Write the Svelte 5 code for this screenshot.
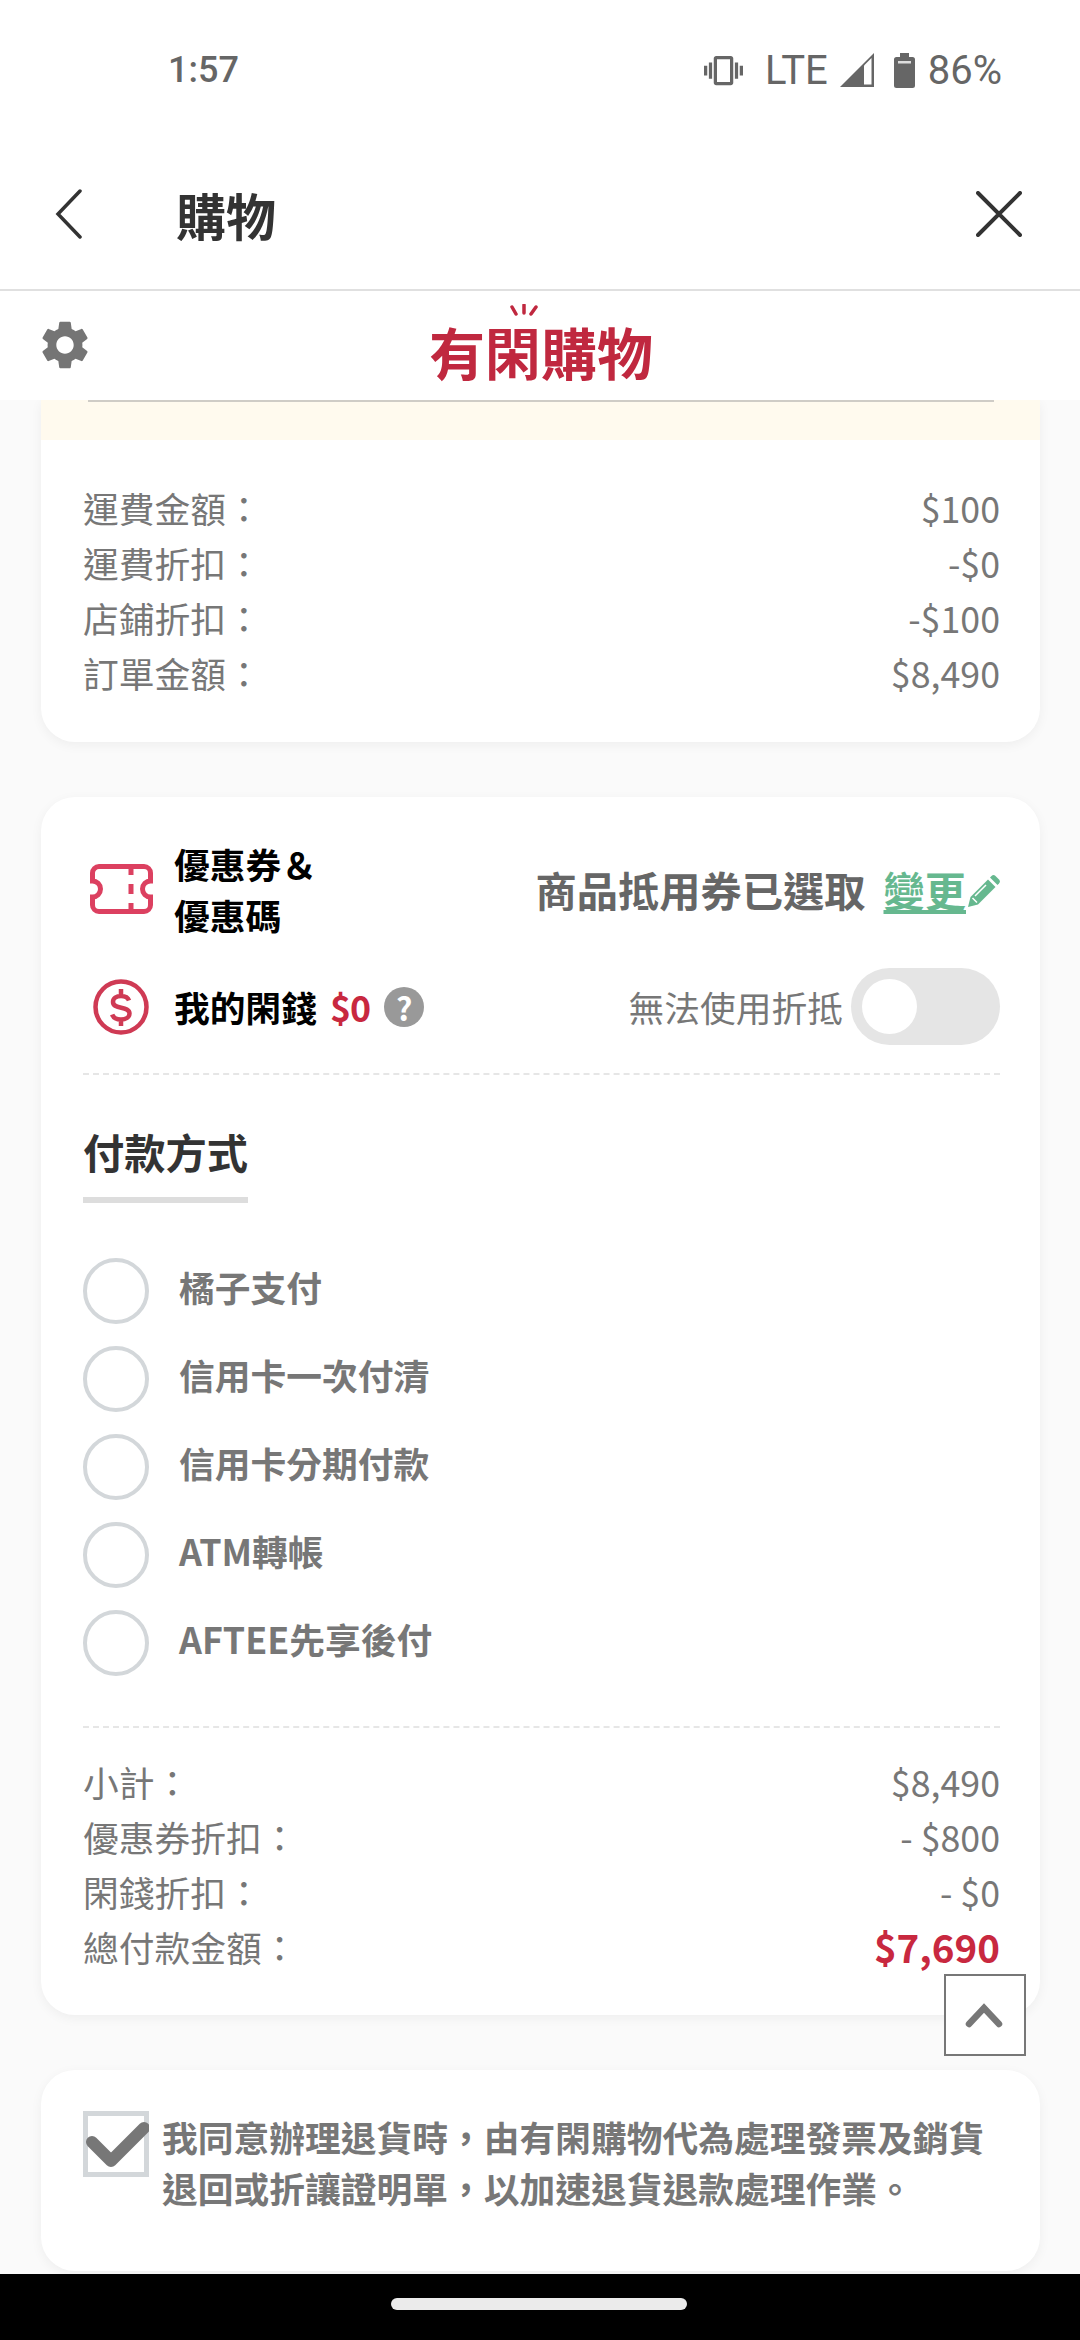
<script>
	const shipping = [
		['運費金額：', '$100'],
		['運費折扣：', '-$0'],
		['店鋪折扣：', '-$100'],
		['訂單金額：', '$8,490']
	];
	const methods = ['橘子支付', '信用卡一次付清', '信用卡分期付款', 'ATM轉帳', 'AFTEE先享後付'];
	const totals = [
		['小計：', '$8,490'],
		['優惠券折扣：', '- $800'],
		['閑錢折扣：', '- $0']
	];
</script>

<div class="screen">
	<div class="status">
		<span class="time">1:57</span>
		<div class="status-right">
			<svg class="vibrate" viewBox="0 0 24 24"><path d="M0 15h2V9H0v6zm3 2h2V7H3v10zm19-8v6h2V9h-2zm-3 8h2V7h-2v10zM16.5 3h-9C6.67 3 6 3.67 6 4.5v15c0 .83.67 1.5 1.5 1.5h9c.83 0 1.5-.67 1.5-1.5v-15c0-.83-.67-1.5-1.5-1.5zM16 19H8V5h8v14z" /></svg>
			<span class="lte">LTE</span>
			<svg class="signal" viewBox="0 0 34 34">
				<path d="M0 34 34 0v34z" fill="#666" />
				<path d="M24 12.5 31.5 5v26.500H24z" fill="#fff" />
			</svg>
			<svg class="battery" viewBox="0 0 21 35">
				<path d="M6 0h9v4h3.500A2.500 2.500 0 0 1 21 6.500V32.500A2.500 2.500 0 0 1 18.500 35H2.500A2.500 2.500 0 0 1 0 32.500V6.500A2.500 2.500 0 0 1 2.500 4H6z" fill="#666" />
				<rect x="4" y="8" width="13" height="2.500" fill="#ddd" />
			</svg>
			<span class="pct">86%</span>
		</div>
	</div>

	<header class="topbar">
		<svg class="back" viewBox="0 0 27 50"><path d="M25 2 3 25l22 23" /></svg>
		<h1>購物</h1>
		<svg class="close" viewBox="0 0 46 46"><path d="M2 2l42 42M44 2 2 44" /></svg>
	</header>

	<div class="brand">
		<svg class="gear" viewBox="0 0 24 24"><path d="M19.14,12.94c0.04-0.3,0.06-0.61,0.06-0.94c0-0.32-0.02-0.64-0.07-0.94l2.03-1.58c0.18-0.14,0.23-0.41,0.12-0.61 l-1.92-3.32c-0.12-0.22-0.37-0.29-0.59-0.22l-2.39,0.96c-0.5-0.38-1.03-0.7-1.62-0.94L14.4,2.81c-0.04-0.24-0.24-0.41-0.48-0.41 h-3.84c-0.24,0-0.43,0.17-0.47,0.41L9.25,5.35C8.66,5.59,8.12,5.92,7.63,6.29L5.24,5.33c-0.22-0.08-0.47,0-0.59,0.22L2.74,8.87 C2.62,9.08,2.66,9.34,2.86,9.48l2.03,1.58C4.84,11.36,4.8,11.69,4.8,12s0.02,0.64,0.07,0.94l-2.03,1.58 c-0.18,0.14-0.23,0.41-0.12,0.61l1.92,3.32c0.12,0.22,0.37,0.29,0.59,0.22l2.39-0.96c0.5,0.38,1.03,0.7,1.62,0.94l0.36,2.54 c0.05,0.24,0.24,0.41,0.48,0.41h3.84c0.24,0,0.44-0.17,0.47-0.41l0.36-2.54c0.59-0.24,1.13-0.56,1.62-0.94l2.39,0.96 c0.22,0.08,0.47,0,0.59-0.22l1.92-3.32c0.12-0.22,0.07-0.47-0.12-0.61L19.14,12.94z M12,15.6c-1.98,0-3.6-1.62-3.6-3.6 s1.62-3.6,3.6-3.6s3.6,1.62,3.6,3.6S13.98,15.6,12,15.6z" /></svg>
		<div class="logo">
			<svg class="sparks" viewBox="0 0 28 14"><path d="M2 3l4 7M14 1v8M26 3l-5 7" /></svg>
			<span>有閑購物</span>
		</div>
	</div>

	<main class="content">
		<section class="card first">
			<div class="cream"><div class="cream-line"></div></div>
			<div class="rows">
				{#each shipping as [label, value]}
					<div class="row"><span>{label}</span><span>{value}</span></div>
				{/each}
			</div>
		</section>

		<section class="card second">
			<div class="coupon">
				<svg class="ticket" viewBox="0 0 63 50">
					<path d="M9 2.500H54a6.500 6.500 0 0 1 6.500 6.500v8a8 8 0 0 0 0 16v8a6.500 6.500 0 0 1-6.500 6.500H9a6.500 6.500 0 0 1-6.500-6.500v-8a8 8 0 0 0 0-16V9A6.500 6.500 0 0 1 9 2.500z" />
					<path d="M41 2v9M41 20v10M41 39v9" />
				</svg>
				<div class="coupon-label">優惠券＆<br />優惠碼</div>
				<div class="coupon-state">
					商品抵用券已選取
					<span class="change">變更</span>
					<svg class="pencil" viewBox="0 0 32 32">
						<path d="M0 32l2.500-10L20 4.500l7.500 7.500L10 29.500z" fill="#66b88f" />
						<path d="M22 2.500 23.500 1a3 3 0 0 1 4 0l3.500 3.500a3 3 0 0 1 0 4L29.500 10z" fill="#66b88f" />
						<path d="M4.500 23l4.500 4.500M7 21 18 10" stroke="#fff" stroke-width="1.500" fill="none" />
					</svg>
				</div>
			</div>

			<div class="coins">
				<svg class="coin" viewBox="0 0 56 56">
					<circle cx="28" cy="28" r="25.500" />
					<path d="M36 21.500c-1-3-4-4.500-8-4.500-4.500 0-8 2.400-8 6 0 8 16.500 3.500 16.500 11.500 0 3.700-3.800 6-8.500 6-4.200 0-7.600-1.600-8.800-5M28 10v7M28 40v7" />
				</svg>
				<span class="coin-label">我的閑錢</span>
				<span class="coin-value">$0</span>
				<span class="help">?</span>
				<span class="disabled-note">無法使用折抵</span>
				<span class="toggle"><span class="knob"></span></span>
			</div>

			<div class="dash dash-a"></div>

			<h2>付款方式</h2>

			<div class="methods">
				{#each methods as method}
					<div class="method"><span class="radio"></span><span class="method-name">{method}</span></div>
				{/each}
			</div>

			<div class="dash dash-b"></div>

			<div class="rows">
				{#each totals as [label, value]}
					<div class="row"><span>{label}</span><span>{value}</span></div>
				{/each}
				<div class="row"><span>總付款金額：</span><span class="grand">$7,690</span></div>
			</div>
		</section>

		<section class="card third">
			<div class="agree">
				<span class="check">
					<svg viewBox="0 0 66 66"><path d="M9 31l19 19 33-33" /></svg>
				</span>
				<p>我同意辦理退貨時，由有閑購物代為處理發票及銷貨退回或折讓證明單，以加速退貨退款處理作業。</p>
			</div>
		</section>

		<button class="to-top" aria-label="top">
			<svg viewBox="0 0 38 26"><path d="M4 22 19 6l15 16" /></svg>
		</button>
	</main>

	<div class="navbar"><span class="pill"></span></div>
</div>

<style>
	:global(body) {
		margin: 0;
		background: #fafafa;
	}

	.screen {
		width: 1080px;
		height: 2340px;
		display: flex;
		flex-direction: column;
		overflow: hidden;
		font-family: 'Noto Sans CJK TC', 'Noto Sans', sans-serif;
		font-size: 35.75px;
		color: #777;
		background: #fafafa;
	}

	/* status bar */
	.status {
		height: 140px;
		flex: none;
		display: flex;
		align-items: center;
		padding: 0 78px 0 168px;
		background: #fff;
		font-family: Roboto, sans-serif;
		font-size: 40px;
		color: #666;
	}
	.time {
		font-size: 36px;
		font-weight: 500;
	}
	.status-right {
		margin-left: auto;
		display: flex;
		align-items: center;
	}
	.vibrate {
		width: 39px;
		height: 39px;
		fill: #666;
	}
	.lte {
		margin-left: 22px;
	}
	.signal {
		width: 34px;
		height: 34px;
		margin-left: 12px;
	}
	.battery {
		width: 21px;
		height: 35px;
		margin-left: 20px;
	}
	.pct {
		margin-left: 13px;
	}

	/* app bar */
	.topbar {
		height: 149px;
		flex: none;
		box-sizing: border-box;
		display: flex;
		align-items: center;
		padding: 0 58px 0 55px;
		background: #fff;
	}
	.topbar h1 {
		margin: -2px 0 0 94px;
		font-size: 50px;
		font-weight: 700;
		color: #333;
	}
	.back {
		width: 27px;
		height: 50px;
		margin-top: -2px;
		fill: none;
		stroke: #333;
		stroke-width: 3.5;
		stroke-linecap: round;
	}
	.close {
		width: 46px;
		height: 46px;
		margin: -2px 0 0 auto;
		fill: none;
		stroke: #333;
		stroke-width: 4;
		stroke-linecap: round;
	}

	.brand {
		height: 109px;
		flex: none;
		display: flex;
		align-items: center;
		justify-content: center;
		position: relative;
		background: #fff;
		border-top: 2px solid #e0e0e0;
		z-index: 1;
	}
	.gear {
		position: absolute;
		left: 36px;
		top: 25px;
		width: 58px;
		height: 58px;
		fill: #757575;
	}
	.logo {
		position: relative;
		font-size: 56px;
		font-weight: 700;
		line-height: 66px;
		color: #c0283f;
		margin: 10px 0 0 2px;
		white-space: nowrap;
	}
	.sparks {
		position: absolute;
		left: 81px;
		top: -14px;
		width: 28px;
		height: 14px;
		fill: none;
		stroke: #c0283f;
		stroke-width: 3.500;
		stroke-linecap: round;
	}

	/* scrolled content */
	.content {
		flex: 1;
		min-height: 0;
		position: relative;
		overflow: hidden;
	}
	.card {
		margin: 0 40px 55px 41px;
		padding: 0 40px 0 42px;
		background: #fff;
		border-radius: 34px;
		box-shadow: 0 3px 12px rgba(0, 0, 0, 0.05);
	}
	.first {
		padding: 0 0 42px;
		border-radius: 0 0 34px 34px;
	}
	.first .rows {
		padding: 40px 40px 0 42px;
	}
	.cream {
		height: 40px;
		background: #fffaee;
	}
	.cream-line {
		height: 2px;
		margin: 0 46px 0 47px;
		background: #cfccc6;
	}
	.row {
		display: flex;
		justify-content: space-between;
		align-items: center;
		height: 55px;
		line-height: 55px;
	}
	.grand {
		font-size: 38.5px;
		font-weight: 700;
		color: #c8283f;
	}

	.second {
		padding-top: 41px;
		padding-bottom: 41px;
	}
	.coupon {
		display: flex;
		align-items: center;
		height: 102px;
		color: #000;
	}
	.ticket {
		width: 63px;
		height: 50px;
		margin-left: 7px;
		fill: none;
		stroke: #dc4060;
		stroke-width: 5;
	}
	.coupon-label {
		margin-left: 21px;
		line-height: 51px;
		font-weight: 700;
	}
	.coupon-state {
		margin-left: auto;
		display: flex;
		align-items: center;
		font-size: 41.25px;
		font-weight: 700;
		color: #666;
		white-space: nowrap;
	}
	.change {
		margin-left: 18px;
		color: #66b88f;
		text-decoration: underline;
	}
	.pencil {
		width: 32px;
		height: 32px;
		margin: 4px 0 0 2px;
	}

	.coins {
		display: flex;
		align-items: center;
		height: 77px;
		margin-top: 28px;
		white-space: nowrap;
	}
	.coin {
		width: 56px;
		height: 56px;
		margin-left: 10px;
		fill: none;
		stroke: #cf3a54;
		stroke-width: 4.500;
	}
	.coin-label {
		margin-left: 25px;
		font-weight: 700;
		color: #000;
	}
	.coin-value {
		margin-left: 13px;
		font-weight: 700;
		letter-spacing: -1px;
		color: #c8283f;
	}
	.help {
		width: 40px;
		height: 40px;
		margin-left: 14px;
		border-radius: 50%;
		background: #999;
		color: #fff;
		font-size: 32px;
		font-weight: 700;
		line-height: 40px;
		text-align: center;
	}
	.disabled-note {
		margin-left: auto;
	}
	.toggle {
		width: 149px;
		height: 77px;
		margin-left: 8px;
		box-sizing: border-box;
		padding: 11px;
		border-radius: 39px;
		background: #e5e5e5;
	}
	.knob {
		display: block;
		width: 55px;
		height: 55px;
		border-radius: 50%;
		background: #fff;
	}

	.dash {
		height: 0;
		border-top: 2px dashed #e6e6e6;
	}
	.dash-a {
		margin-top: 28px;
	}
	.dash-b {
		margin-top: 50px;
		margin-bottom: 26px;
	}

	h2 {
		width: 165px;
		margin: 49px 0 0;
		padding-bottom: 18px;
		border-bottom: 6px solid #ddd;
		font-size: 41.25px;
		font-weight: 700;
		line-height: 55px;
		color: #333;
		white-space: nowrap;
	}

	.methods {
		display: flex;
		flex-direction: column;
		gap: 22px;
		margin-top: 55px;
	}
	.method {
		display: flex;
		align-items: center;
		gap: 30px;
		height: 66px;
		font-weight: 700;
	}
	.method-name {
		margin-top: -10px;
	}
	.radio {
		width: 66px;
		height: 66px;
		box-sizing: border-box;
		border: 4.5px solid #d3d7da;
		border-radius: 50%;
		background: #fff;
	}

	.third {
		padding-top: 41px;
		padding-bottom: 58px;
		margin-bottom: 0;
	}
	.agree {
		display: flex;
		gap: 13px;
	}
	.check {
		flex: none;
		width: 66px;
		height: 66px;
		box-sizing: border-box;
		border: 5px solid #d3d7da;
		position: relative;
	}
	.check svg {
		position: absolute;
		left: -5px;
		top: -5px;
		width: 66px;
		height: 66px;
		fill: none;
		stroke: #777;
		stroke-width: 12;
		stroke-linecap: round;
		stroke-linejoin: round;
	}
	.agree p {
		margin: 0;
		line-height: 51px;
		font-weight: 700;
	}

	.to-top {
		position: absolute;
		left: 944px;
		top: 1574px;
		width: 82px;
		height: 82px;
		padding: 0;
		box-sizing: border-box;
		display: flex;
		align-items: center;
		justify-content: center;
		background: #fff;
		border: 2px solid #777;
	}
	.to-top svg {
		width: 38px;
		height: 26px;
		margin-left: -3px;
		fill: none;
		stroke: #777;
		stroke-width: 6.500;
		stroke-linecap: round;
	}

	.navbar {
		height: 66px;
		flex: none;
		display: flex;
		align-items: center;
		justify-content: center;
		background: #000;
	}
	.pill {
		width: 296px;
		height: 12px;
		margin: -6px 2px 0 0;
		border-radius: 6px;
		background: #ebebeb;
	}
</style>
